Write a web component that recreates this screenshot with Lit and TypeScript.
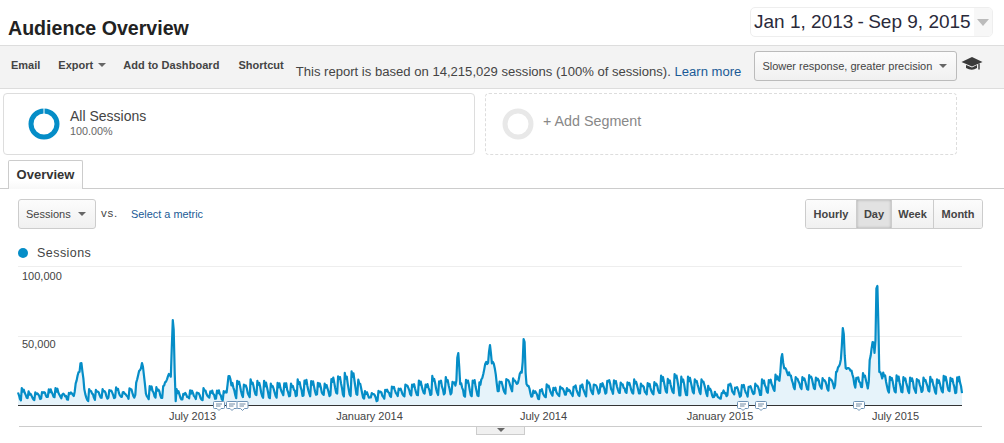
import { LitElement, html, css, svg } from "lit";
import { customElement } from "lit/decorators.js";

const W = 1004;
const X0 = 18;
const X1 = 962;
const DAYS = 982;
const toX = (i: number) => X0 + (i / DAYS) * (X1 - X0);

// [x, top y, low y] envelope of the weekly rhythm
const ENV: [number, number, number][] = [
  [18, 390, 399], [70, 391, 399], [120, 390, 399], [150, 389, 398], [178, 391, 399], [225, 390, 399],
  [232, 382, 397], [280, 382, 396], [330, 381, 396], [340, 373, 395], [358, 376, 394], [365, 388, 397],
  [372, 396, 400], [385, 391, 398], [400, 385, 395], [425, 382, 395], [432, 376, 394], [448, 379, 395],
  [480, 381, 395], [500, 379, 391], [515, 380, 392], [530, 388, 397], [560, 387, 396], [600, 382, 394],
  [650, 381, 394], [675, 376, 394], [705, 380, 394], [712, 390, 397], [720, 396, 400], [728, 387, 396],
  [760, 382, 395], [775, 378, 391], [795, 376, 389], [835, 377, 389], [862, 373, 387], [885, 377, 392],
  [962, 379, 392],
];
// [x, peak y, half-width]
const SPIKES: [number, number, number][] = [
  [81, 363, 3], [79, 372, 5], [142, 363, 3], [140, 370, 5], [173, 320, 1.8], [169, 374, 6],
  [229, 376, 2], [458, 353, 1.6], [490, 345, 2.5], [486, 362, 5], [493, 362, 4], [524, 339, 1.8], [521, 372, 5],
  [782, 354, 2], [785, 368, 7], [843, 328, 2.2], [842, 358, 7], [848, 368, 7], [877, 286, 2],
  [873, 342, 4.5], [880, 372, 5],
];
const WEEK = [1, 0.78, 0.92, 0.62, 0.34, 0.04, 0.0];

function lerpEnv(x: number): [number, number] {
  for (let k = 0; k < ENV.length - 1; k++) {
    const a = ENV[k], b = ENV[k + 1];
    if (x >= a[0] && x <= b[0]) {
      const t = (x - a[0]) / (b[0] - a[0]);
      return [a[1] + (b[1] - a[1]) * t, a[2] + (b[2] - a[2]) * t];
    }
  }
  return [379, 392];
}

function rnd(n: number): number {
  const v = Math.sin(n * 12.9898 + 4.1) * 43758.5453;
  return v - Math.floor(v);
}

function buildPoints(): [number, number][] {
  const pts: [number, number][] = [];
  for (let i = 0; i <= DAYS; i++) {
    const x = toX(i);
    const [top, low] = lerpEnv(x);
    const week = Math.floor((i + 3) / 7);
    const topW = top + (rnd(week) - 0.5) * 6;
    const lowW = low + (rnd(week + 500) - 0.5) * 3;
    let y = lowW + (topW - lowW) * WEEK[(i + 3) % 7] + (rnd(i + 1000) - 0.5) * 2.5;
    for (const [sx, sy, hw] of SPIKES) {
      const d = Math.max(0, Math.abs(x - sx) - 0.5);
      if (d < hw) y = Math.min(y, sy + (d / hw) * (y - sy));
    }
    pts.push([Math.round(x * 10) / 10, Math.round(y * 10) / 10]);
  }
  return pts;
}

const POINTS = buildPoints();
const LINE = POINTS.map((p) => p.join(",")).join(" ");
const AREA = `${X0},405 ${LINE} ${X1},405`;
const CHART_TOP = 262;

const MONTHS = [
  { x: 192.5, t: "July 2013" }, { x: 369.5, t: "January 2014" }, { x: 543.5, t: "July 2014" },
  { x: 720, t: "January 2015" }, { x: 895.5, t: "July 2015" },
];
const NOTES = [219, 232, 242.5, 743, 761, 859];

@customElement("app-root")
export class AppRoot extends LitElement {
  static styles = css`
    :host { display: block; width: 1004px; height: 443px; overflow: hidden; background: #fff;
      font-family: "Liberation Sans", Arial, sans-serif; color: #333; }
    .head { height: 45px; box-sizing: border-box; display: flex; justify-content: space-between; align-items: flex-start;
      padding: 7px 11px 0 8px; }
    .title { font-size: 19.6px; font-weight: bold; color: #222; margin-top: 9px; line-height: 24px; }
    .date { width: 243px; height: 30px; box-sizing: border-box; border: 1px solid #eee; border-radius: 5px;
      display: flex; overflow: hidden; }
    .date-text { flex: 1; font-size: 19px; line-height: 27px; padding-left: 3px; color: #2a2a3a; white-space: nowrap; }
    .hy { margin: 0 -1px; }
    .date-arrow { width: 18px; background: #f7f7f7; display: flex; align-items: center; justify-content: center; }
    .tri-big { width: 0; height: 0; border-left: 6px solid transparent; border-right: 6px solid transparent; border-top: 7px solid #bbb; }
    .toolbar { height: 44px; box-sizing: border-box; background: #f3f3f3; border-top: 1px solid #ddd; border-bottom: 1px solid #ddd;
      display: flex; align-items: flex-start; }
    .tool { font-size: 11px; font-weight: bold; color: #444; margin-top: 12px; line-height: 14px; white-space: nowrap; display: flex; align-items: center; }
    .tool.email { margin-left: 11px; }
    .tool.export { margin-left: 18px; }
    .tool.add { margin-left: 17px; letter-spacing: 0.06px; }
    .tool.short { margin-left: 19px; }
    .tri { width: 0; height: 0; border-left: 4px solid transparent; border-right: 4px solid transparent; border-top: 4px solid #666; display: inline-block; }
    .tool .tri { margin-left: 5px; }
    .based { font-size: 13.09px; color: #444; margin: 18px 0 0 12px; line-height: 15px; white-space: nowrap; }
    .based a, .link { color: #1a5a96; text-decoration: none; }
    .select { width: 203px; height: 30px; box-sizing: border-box; margin: 5px 0 0 13px; border: 1px solid #bbb; border-radius: 3px;
      background: linear-gradient(#fcfcfc, #f0f0f0); display: flex; align-items: center; justify-content: space-between;
      padding: 0 9px 0 7px; font-size: 11px; color: #444; white-space: nowrap; }
    .cap { margin: 11px 0 0 4px; }
    .segs { display: flex; padding: 4px 0 0 3px; gap: 10px; }
    .seg { box-sizing: border-box; height: 62px; border-radius: 4px; display: flex; align-items: flex-start; }
    .seg.on { width: 472px; border: 1px solid #ddd; }
    .seg.add { width: 472px; border: 1px dashed #ddd; }
    .ring { margin: 13px 0 0 23px; flex: none; }
    .seg.add .ring { margin-left: 15px; }
    .seg-text { margin: 14px 0 0 9px; }
    .seg-name { font-size: 14px; line-height: 17px; color: #444; }
    .seg-pct { font-size: 10.8px; line-height: 12px; color: #666; }
    .seg-add { font-size: 14.3px; color: #888; margin: 19px 0 0 8px; line-height: 17px; }
    .tabs { margin-top: 5px; height: 29px; box-sizing: border-box; border-bottom: 1px solid #ccc; padding-left: 8px; display: flex; }
    .tab { width: 75px; height: 29px; box-sizing: border-box; border: 1px solid #ccc; border-bottom: none;
      background: linear-gradient(#fff 70%, #f8f8f8); font-size: 13px; font-weight: bold; color: #333;
      text-align: center; line-height: 27px; border-radius: 2px 2px 0 0; }
    .controls { display: flex; align-items: flex-start; padding: 10px 21px 0 18px; height: 40px; box-sizing: border-box; }
    .metric { width: 78px; height: 30px; box-sizing: border-box; border: 1px solid #ccc; border-radius: 3px;
      background: linear-gradient(#fcfcfc, #f0f0f0); display: flex; align-items: center; justify-content: space-between;
      padding: 0 9px 0 7px; font-size: 11px; color: #444; }
    .vs { width: 16px; font-size: 11.5px; color: #444; margin: 8px 0 0 5px; letter-spacing: 0.8px; line-height: 13px; }
    .link { font-size: 10.9px; margin: 9px 0 0 14px; line-height: 13px; }
    .spacer { flex: 1; }
    .group { display: flex; height: 30px; box-sizing: border-box; border: 1px solid #ccc; border-radius: 3px; overflow: hidden; }
    .gbtn { box-sizing: border-box; background: linear-gradient(#fcfcfc, #f0f0f0); font-size: 11px; font-weight: bold; color: #444;
      display: flex; align-items: center; justify-content: center; border-left: 1px solid #ccc; }
    .gbtn:first-child { border-left: none; }
    .gbtn.hourly { width: 50px; }
    .gbtn.day { width: 35px; }
    .gbtn.week { width: 42px; }
    .gbtn.month { width: 49px; }
    .gbtn.sel { background: #e2e2e2; box-shadow: inset 0 0 3px #aaa; }
    .legend { display: flex; align-items: center; padding: 14px 0 0 18px; height: 33px; box-sizing: border-box; }
    .dot { width: 10px; height: 10px; border-radius: 50%; background: #058dc7; }
    .legend-label { font-size: 12.5px; color: #444; margin: 1px 0 0 9px; letter-spacing: 0.45px; }
    .chart { position: relative; height: 181px; }
    .chart svg.plot { display: block; }
    .axis { font: 11px "Liberation Sans", Arial, sans-serif; fill: #444; }
    .handle { position: absolute; left: 476px; top: 165px; width: 49px; height: 8px; box-sizing: border-box;
      border: 1px solid #ccc; border-top: none; background: #f0f0f0; display: flex; justify-content: center; padding-top: 1px; }
  `;

  private ring(color: string, gap: boolean) {
    return html`<svg class="ring" width="34" height="34" viewBox="0 0 34 34">
      <circle cx="17" cy="17" r="13" fill="none" stroke=${color} stroke-width="5"></circle>
      ${gap ? svg`<rect x="16.5" y="0" width="1" height="7" fill="#fff"></rect>` : ""}
    </svg>`;
  }

  private note(x: number) {
    return svg`<g transform="translate(${x - 6},139)">
      <path d="M1.5 0.5H10.5Q11.5 0.5 11.5 1.5V6.5Q11.5 7.5 10.5 7.5H8L6 9.5L4 7.5H1.5Q0.5 7.5 0.5 6.5V1.5Q0.5 0.5 1.5 0.5Z" fill="#fff" stroke="#6f93b5"></path>
      <path d="M3 3H9M3 5H7.5" stroke="#6f8aa5" fill="none"></path>
    </g>`;
  }

  private chart() {
    return html`<svg class="plot" width=${W} height="170" viewBox="0 0 ${W} 170">
      <line x1="18" x2="962" y1="4.5" y2="4.5" stroke="#eee"></line>
      <line x1="18" x2="962" y1="74.5" y2="74.5" stroke="#eee"></line>
      <g transform="translate(0,${-CHART_TOP})">
        <polygon points=${AREA} fill="#e6f3fa"></polygon>
        <polyline points=${LINE} fill="none" stroke="#058dc7" stroke-width="2.2" stroke-linejoin="round"></polyline>
      </g>
      <line x1="18" x2="962" y1="143.5" y2="143.5" stroke="#333"></line>
      <text class="axis" x="22" y="17.5">100,000</text>
      <text class="axis" x="22" y="86">50,000</text>
      ${MONTHS.map((m) => svg`<text class="axis" x=${m.x} y="158" text-anchor="middle">${m.t}</text>`)}
      ${NOTES.map((n) => this.note(n))}
      <line x1="19" x2="982" y1="164.5" y2="164.5" stroke="#ccc"></line>
    </svg>`;
  }

  render() {
    return html`
      <div class="head">
        <div class="title">Audience Overview</div>
        <div class="date">
          <div class="date-text">Jan 1, 2013 <span class="hy">-</span> Sep 9, 2015</div>
          <div class="date-arrow"><span class="tri-big"></span></div>
        </div>
      </div>
      <div class="toolbar">
        <div class="tool email">Email</div>
        <div class="tool export">Export<span class="tri"></span></div>
        <div class="tool add">Add to Dashboard</div>
        <div class="tool short">Shortcut</div>
        <div class="based">This report is based on 14,215,029 sessions (100% of sessions). <a>Learn more</a></div>
        <div class="select"><span>Slower response, greater precision</span><span class="tri"></span></div>
        <svg class="cap" width="22" height="15" viewBox="0 0 22 15">
          <path d="M11 0L21.5 5L11 9.5L0.5 5Z" fill="#3a3a3a"></path>
          <path d="M5 8V11Q11 14.5 16 11V8L11 10.5Z" fill="#3a3a3a"></path>
          <path d="M18 6.5V12.5" stroke="#3a3a3a" stroke-width="1.4" fill="none"></path>
        </svg>
      </div>
      <div class="segs">
        <div class="seg on">
          ${this.ring("#058dc7", true)}
          <div class="seg-text">
            <div class="seg-name">All Sessions</div>
            <div class="seg-pct">100.00%</div>
          </div>
        </div>
        <div class="seg add">
          ${this.ring("#e8e8e8", false)}
          <div class="seg-add">+ Add Segment</div>
        </div>
      </div>
      <div class="tabs"><div class="tab">Overview</div></div>
      <div class="controls">
        <div class="metric"><span>Sessions</span><span class="tri"></span></div>
        <div class="vs">vs.</div>
        <a class="link">Select a metric</a>
        <div class="spacer"></div>
        <div class="group">
          <div class="gbtn hourly">Hourly</div>
          <div class="gbtn day sel">Day</div>
          <div class="gbtn week">Week</div>
          <div class="gbtn month">Month</div>
        </div>
      </div>
      <div class="legend"><span class="dot"></span><span class="legend-label">Sessions</span></div>
      <div class="chart">
        ${this.chart()}
        <div class="handle"><span class="tri"></span></div>
      </div>
    `;
  }
}
